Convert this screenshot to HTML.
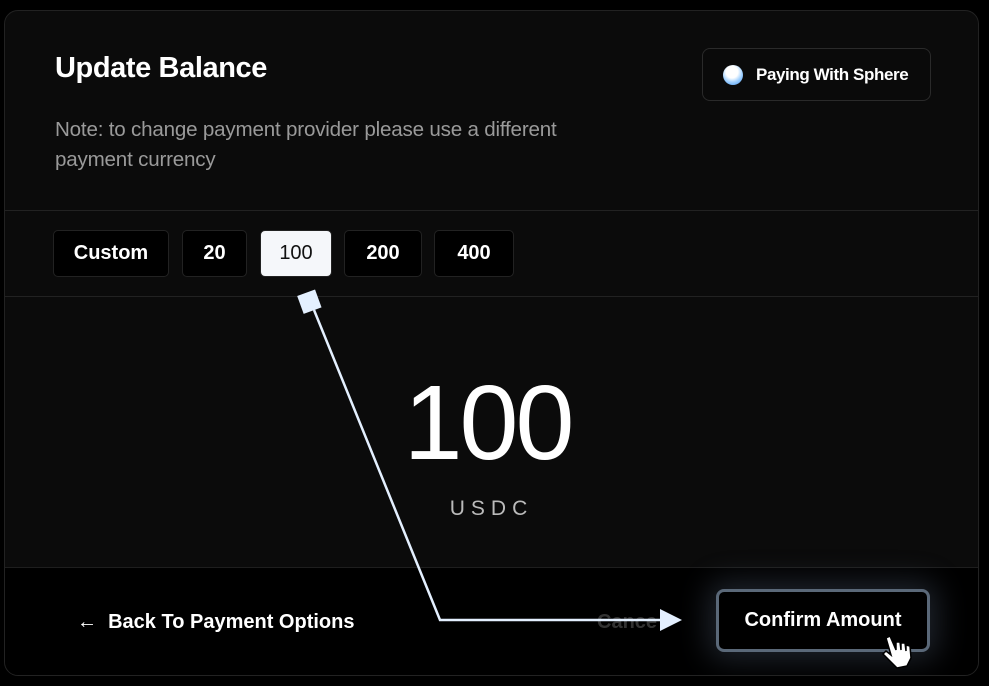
<!DOCTYPE html>
<html><head><meta charset="utf-8"><style>
*{margin:0;padding:0;box-sizing:border-box}
body{width:989px;height:686px;background:#000;font-family:"Liberation Sans",sans-serif;position:relative;overflow:hidden;color:#fff}
.card{position:absolute;left:4px;top:10px;width:975px;height:666px;background:#0b0b0b;border:1px solid #222;border-radius:14px;overflow:hidden}
.abs{position:absolute}
h1{position:absolute;left:50px;top:41px;font-size:29px;font-weight:bold;letter-spacing:-0.4px}
.note{position:absolute;left:50px;top:104px;font-size:20.6px;line-height:30px;color:#9a9a9a;width:560px;letter-spacing:-0.2px}
.pill{position:absolute;left:697px;top:37px;width:229px;height:53px;border:1px solid #2a2a2a;border-radius:8px;background:#0a0a0a;font-size:17px;font-weight:bold;display:flex;align-items:center;padding-left:53px;letter-spacing:-0.4px}
.orb{position:absolute;left:20px;top:16px;width:20px;height:20px;border-radius:50%;background:radial-gradient(circle at 45% 35%,#fff 35%,#9fd0ff 60%,#3a8ff0 100%)}
.hl{position:absolute;left:0;width:100%;height:1px;background:#222}
.btn{position:absolute;top:219px;height:47px;background:#000;border:1px solid #222;border-radius:5px;font-size:20px;font-weight:bold;display:flex;align-items:center;justify-content:center}
.big{position:absolute;left:-4px;width:100%;text-align:center;top:352px;font-size:106px;color:#fff;letter-spacing:-3px}
.usdc{position:absolute;left:0;width:100%;text-align:center;top:486px;font-size:21px;color:#bbb;letter-spacing:6px}
.foot{position:absolute;left:0;top:556px;width:100%;height:110px;background:#000;border-top:1px solid #1e1e1e}
.back{position:absolute;left:72px;top:43px;font-size:20px;font-weight:bold}
.confirm{position:absolute;left:711px;top:21px;width:214px;height:63px;border:3px solid #5a6878;border-radius:8px;background:#000;font-size:20px;font-weight:bold;display:flex;align-items:center;justify-content:center;box-shadow:0 0 30px 8px rgba(120,140,170,0.25)}
</style></head><body>
<div class="card">
<h1>Update Balance</h1>
<div class="note">Note: to change payment provider please use a different payment currency</div>
<div class="pill"><div class="orb"></div>Paying With Sphere</div>
<div class="hl" style="top:199px"></div>
<div class="btn" style="left:48px;width:116px">Custom</div>
<div class="btn" style="left:177px;width:65px">20</div>
<div class="btn" style="left:255px;width:72px;background:#f5f7fa;color:#111;font-weight:normal">100</div>
<div class="btn" style="left:339px;width:78px">200</div>
<div class="btn" style="left:429px;width:80px">400</div>
<div class="hl" style="top:285px"></div>
<div class="big">100</div>
<div class="usdc">USDC</div>
<div class="foot">
<div class="back">←&nbsp; Back To Payment Options</div>
<div class="abs" style="left:592px;top:43px;font-size:20px;color:#333;font-weight:bold">Cance</div>
<div class="confirm">Confirm Amount</div>
</div>
</div>
<svg class="abs" style="left:0;top:0" width="989" height="686">
<rect x="300" y="292" width="19" height="19" fill="#e4f0ff" transform="rotate(-20 310 302)"/>
<polyline points="314,310 440,620 662,620" fill="none" stroke="#e4f0ff" stroke-width="2.5"/>
<polygon points="660,609 682,620 660,631" fill="#e4f0ff"/>
<path d="M886 638 l4 -2 l6 14 l0 -8 l4 0 l1 8 l0 -7 l4 0 l1 8 l0 -6 l4 1 l1 12 l-4 8 l-10 2 l-8 -8 l-6 -6 l3 -3 l5 4 z" fill="#fff" stroke="#000" stroke-width="1.5"/>
</svg>
</body></html>
